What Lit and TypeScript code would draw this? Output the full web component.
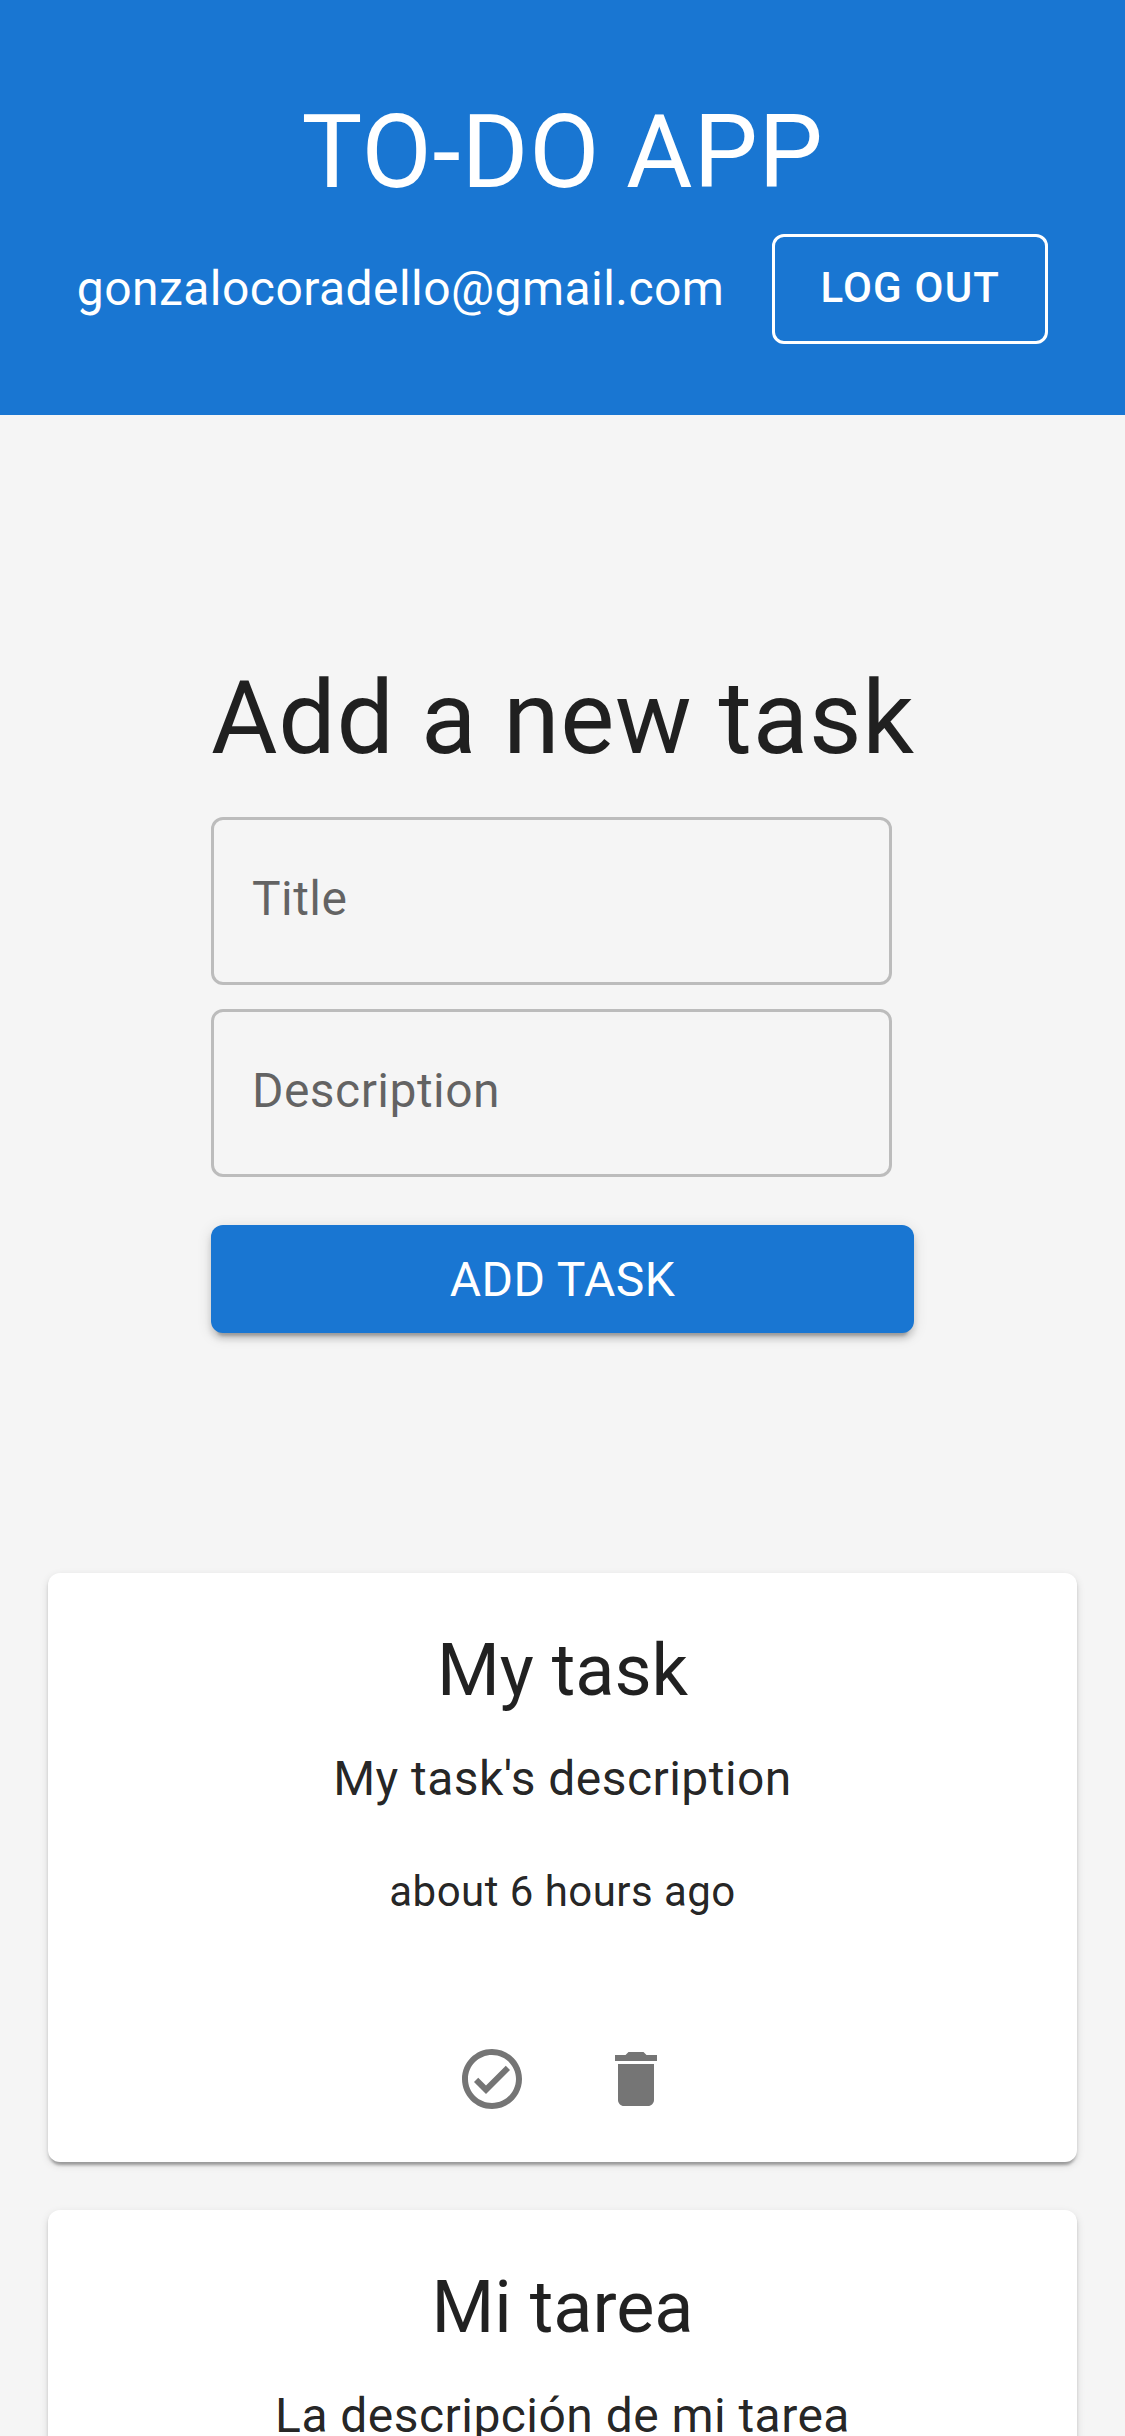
import { LitElement, html, css } from "lit";
import { customElement, property } from "lit/decorators.js";

@customElement("task-card")
export class TaskCard extends LitElement {
  @property() heading = "";
  @property() description = "";
  @property() age = "";

  static styles = css`
    :host {
      display: block;
      box-sizing: border-box;
      height: 589px;
      flex: none;
      padding-top: 49px;
      border-radius: 12px;
      background: #fff;
      text-align: center;
      box-shadow: 0 6px 3px -3px rgba(0, 0, 0, 0.2), 0 3px 3px 0 rgba(0, 0, 0, 0.14),
        0 3px 9px 0 rgba(0, 0, 0, 0.12);
    }
    .heading {
      margin: 0;
      font-size: 72px;
      font-weight: 400;
      line-height: 97px;
    }
    .description {
      margin: 23px 0 0;
      font-size: 48px;
      line-height: 73px;
      letter-spacing: 0.00938em;
    }
    .age {
      margin: 46px 0 0;
      font-size: 42px;
      line-height: 61px;
      letter-spacing: 0.01071em;
    }
    .actions {
      display: flex;
      justify-content: center;
      gap: 72px;
      margin-top: 121px;
      padding-left: 3px;
    }
    .icon {
      display: block;
      width: 72px;
      height: 72px;
      fill: #757575;
    }
  `;

  render() {
    return html`
      <h2 class="heading">${this.heading}</h2>
      <p class="description">${this.description}</p>
      <p class="age">${this.age}</p>
      <div class="actions">
        <svg class="icon" viewBox="0 0 24 24">
          <path
            d="M12 2C6.48 2 2 6.48 2 12s4.48 10 10 10 10-4.48 10-10S17.52 2 12 2zm0 18c-4.41 0-8-3.59-8-8s3.59-8 8-8 8 3.59 8 8-3.59 8-8 8zM16.59 7.58 10 14.17l-2.59-2.58L6 13l4 4 8-8z"
          />
        </svg>
        <svg class="icon" viewBox="0 0 24 24">
          <path d="M6 19c0 1.1.9 2 2 2h8c1.1 0 2-.9 2-2V7H6v12zM19 4h-3.5l-1-1h-5l-1 1H5v2h14V4z" />
        </svg>
      </div>
    `;
  }
}

@customElement("app-root")
export class AppRoot extends LitElement {
  static styles = css`
    :host {
      display: block;
      height: 2436px;
      overflow: hidden;
      background: #f5f5f5;
      color: rgba(0, 0, 0, 0.87);
      font-family: Roboto, "Liberation Sans", sans-serif;
    }
    .header {
      box-sizing: border-box;
      height: 415px;
      padding-top: 89px;
      background: #1976d2;
      color: #fff;
    }
    .title {
      margin: 0;
      font-size: 102px;
      font-weight: 400;
      line-height: 126px;
      letter-spacing: 0.00735em;
      text-align: center;
      white-space: nowrap;
    }
    .account {
      display: flex;
      justify-content: center;
      align-items: center;
      gap: 48px;
      margin-top: 19px;
    }
    .email {
      font-size: 48px;
      line-height: 73px;
      letter-spacing: 0.00938em;
    }
    .logout {
      padding: 14px 45px 16.5px;
      border: 3px solid #fff;
      border-radius: 12px;
      background: none;
      color: inherit;
      font: 500 42px/73px Roboto, "Liberation Sans", sans-serif;
      letter-spacing: 0.02857em;
    }
    .form {
      display: flex;
      flex-direction: column;
      align-items: flex-start;
      width: 703px;
      margin: 240px auto 0;
    }
    .field {
      box-sizing: border-box;
      width: 681px;
      height: 168px;
      margin: 0 0 24px;
      padding: 42px 38px 47px;
      border: 3px solid rgba(0, 0, 0, 0.23);
      border-radius: 12px;
      background: none;
      font: 400 48px/73px Roboto, "Liberation Sans", sans-serif;
      letter-spacing: 0.00938em;
    }
    .field::placeholder {
      color: rgba(0, 0, 0, 0.6);
      opacity: 1;
    }
    .field:first-of-type {
      margin-top: 36px;
    }
    .submit {
      width: 703px;
      height: 108px;
      margin-top: 24px;
      padding: 18px 0 17px;
      border: 0;
      border-radius: 12px;
      background: #1976d2;
      color: #fff;
      font: 400 48px/73px Roboto, "Liberation Sans", sans-serif;
      letter-spacing: 0.00938em;
      box-shadow: 0 9px 3px -6px rgba(0, 0, 0, 0.2), 0 6px 6px 0 rgba(0, 0, 0, 0.14),
        0 3px 15px 0 rgba(0, 0, 0, 0.12);
    }
    .tasks {
      display: flex;
      flex-direction: column;
      gap: 48px;
      padding: 240px 48px 0;
    }
  `;

  private tasks = [
    { heading: "My task", description: "My task's description", age: "about 6 hours ago" },
    { heading: "Mi tarea", description: "La descripción de mi tarea", age: "about 6 hours ago" },
  ];

  render() {
    return html`
      <header class="header">
        <h1 class="title">TO-DO APP</h1>
        <div class="account">
          <span class="email">gonzalocoradello@gmail.com</span>
          <button class="logout">LOG OUT</button>
        </div>
      </header>
      <main>
        <section class="form">
          <h2 class="title">Add a new task</h2>
          <input class="field" placeholder="Title" />
          <input class="field" placeholder="Description" />
          <button class="submit">ADD TASK</button>
        </section>
        <section class="tasks">
          ${this.tasks.map(
            (t) => html`<task-card .heading=${t.heading} .description=${t.description} .age=${t.age}></task-card>`
          )}
        </section>
      </main>
    `;
  }
}
